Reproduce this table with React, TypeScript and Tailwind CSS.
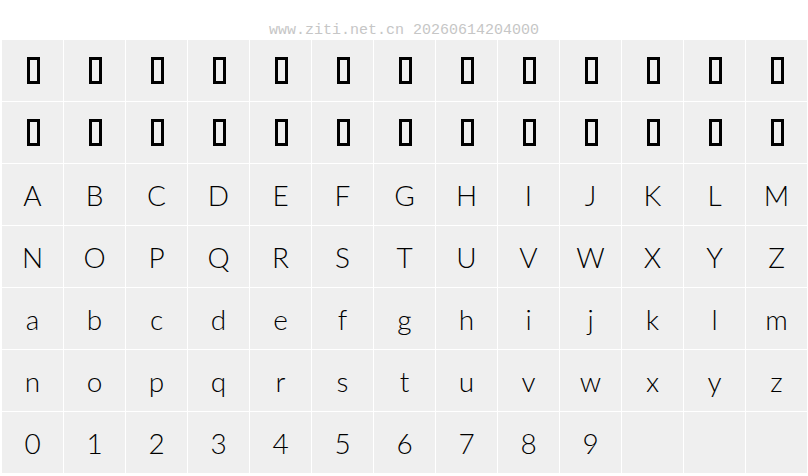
import React from 'react';

const upper = 'ABCDEFGHIJKLMNOPQRSTUVWXYZ'.split('');
const lower = 'abcdefghijklmnopqrstuvwxyz'.split('');
const digits = '0123456789'.split('');

type Cell = { kind: 'tofu' } | { kind: 'char'; ch: string } | { kind: 'empty' };

const cells: Cell[] = [
  ...Array.from({ length: 26 }, () => ({ kind: 'tofu' as const })),
  ...upper.map((ch) => ({ kind: 'char' as const, ch })),
  ...lower.map((ch) => ({ kind: 'char' as const, ch })),
  ...digits.map((ch) => ({ kind: 'char' as const, ch })),
  ...Array.from({ length: 3 }, () => ({ kind: 'empty' as const })),
];

const GlyphCell: React.FC<{ cell: Cell }> = ({ cell }) => (
  <div className="h-[61px] bg-[#efefef] flex items-center justify-center">
    {cell.kind === 'tofu' && (
      <div className="ml-[2px] -mt-[1px] w-[13px] h-[27px] border-[3px] border-black" />
    )}
    {cell.kind === 'char' && (
      <span className="text-[28px] leading-none text-black font-light font-['Lato','Noto_Sans',sans-serif]">
        {cell.ch}
      </span>
    )}
  </div>
);

export default function App() {
  return (
    <div className="w-[808px] h-[476px] bg-white overflow-hidden">
      <div className="h-[40px] flex items-end justify-center pb-[2px]">
        <span className="text-[15px] leading-none text-[#c6c6c6] font-['Liberation_Mono',monospace]">
          www.ziti.net.cn 20260614204000
        </span>
      </div>
      <div className="pl-[2px] grid grid-cols-[repeat(13,61px)] gap-[1px]">
        {cells.map((c, i) => (
          <GlyphCell key={i} cell={c} />
        ))}
      </div>
    </div>
  );
}
